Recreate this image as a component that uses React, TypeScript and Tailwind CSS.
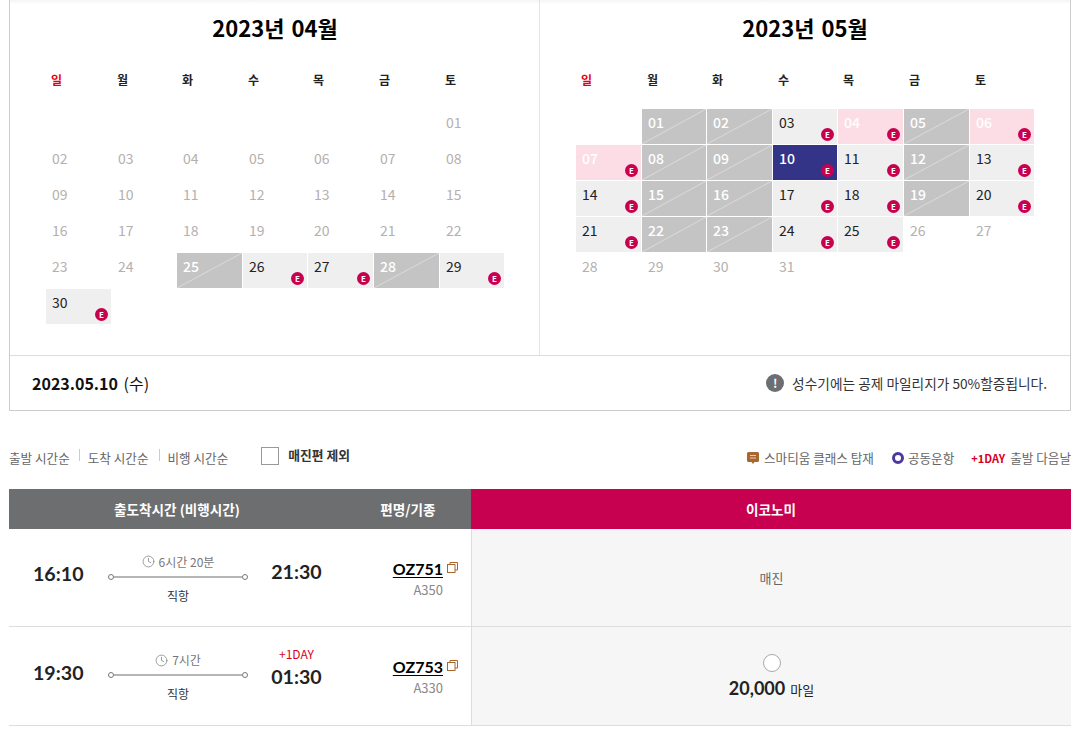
import type { ReactNode } from 'react'
import { Clock } from 'lucide-react'

type Kind = 'blank' | 'plain' | 'sold' | 'open' | 'peak' | 'selected'
type Day = { label: string; kind: Kind }

const WEEK = ['일', '월', '화', '수', '목', '금', '토']

const fmt = (n: number) => String(n).padStart(2, '0')

function buildMonth(offset: number, last: number, kinds: Record<number, Kind>): Day[] {
  const days: Day[] = []
  for (let i = 0; i < offset; i++) days.push({ label: '', kind: 'blank' })
  for (let d = 1; d <= last; d++) days.push({ label: fmt(d), kind: kinds[d] ?? 'plain' })
  return days
}

const APRIL = buildMonth(6, 30, { 25: 'sold', 26: 'open', 27: 'open', 28: 'sold', 29: 'open', 30: 'open' })
const MAY = buildMonth(1, 31, {
  1: 'sold', 2: 'sold', 3: 'open', 4: 'peak', 5: 'sold', 6: 'peak', 7: 'peak',
  8: 'sold', 9: 'sold', 10: 'selected', 11: 'open', 12: 'sold', 13: 'open',
  14: 'open', 15: 'sold', 16: 'sold', 17: 'open', 18: 'open', 19: 'sold', 20: 'open',
  21: 'open', 22: 'sold', 23: 'sold', 24: 'open', 25: 'open',
})

function DayCell({ day }: { day: Day }) {
  if (day.kind === 'blank') return <div />
  const styles: Record<Kind, string> = {
    blank: '',
    plain: 'text-[#b5b0ad]',
    sold: 'font-medium text-white bg-[#c4c4c4] bg-[linear-gradient(to_bottom_right,#c4c4c4_calc(50%-1px),#d8d8d8_50%,#c4c4c4_calc(50%+1px))]',
    open: 'text-[#222] bg-[#efefef]',
    peak: 'font-medium text-white bg-[#fcdde6]',
    selected: 'font-medium text-white bg-[#333388]',
  }
  const hasBadge = day.kind === 'open' || day.kind === 'peak' || day.kind === 'selected'
  return (
    <div className={`relative pl-[6px] pt-[3px] text-[14px] leading-[20px] ${styles[day.kind]}`}>
      {day.label}
      {hasBadge && (
        <span className="absolute right-[3px] bottom-[3px] flex h-[13px] w-[13px] items-center justify-center rounded-full bg-[#c8004f] text-[8px] font-bold leading-none text-white">
          E
        </span>
      )}
    </div>
  )
}

function Month({ title, days, divided }: { title: string; days: Day[]; divided?: boolean }) {
  return (
    <div className={`pl-[36px] ${divided ? 'border-r border-[#e4e4e4]' : ''}`}>
      <h2 className="mb-[4px] flex h-[54px] w-[458px] items-center justify-center text-[22px] font-bold text-black [word-spacing:2px]">{title}</h2>
      <div className="mb-[7px] grid h-[44px] grid-cols-[65px_64px_65px_64px_65px_65px_64px] items-center gap-x-px">
        {WEEK.map((w, i) => (
          <div key={w} className={`pl-[5px] text-[12px] font-bold ${i === 0 ? 'text-[#e60012]' : 'text-[#222]'}`}>
            {w}
          </div>
        ))}
      </div>
      <div className="grid grid-cols-[65px_64px_65px_64px_65px_65px_64px] auto-rows-[35px] gap-px">
        {days.map((d, i) => (
          <DayCell key={i} day={d} />
        ))}
      </div>
    </div>
  )
}

function CopyIcon() {
  return (
    <svg width="11" height="11" viewBox="0 0 11 11" fill="none" stroke="#a8672f" strokeWidth="1">
      <rect x="0.5" y="2.5" width="7.5" height="8" fill="#fff" />
      <path d="M3 2.5V0.5H10.5V8H8" />
    </svg>
  )
}

function Route({ duration }: { duration: string }) {
  return (
    <div className="flex w-[140px] flex-col items-center pt-[2px]">
      <div className="flex items-center gap-[4px] text-[12px] leading-[18px] text-[#777]">
        <Clock size={13} strokeWidth={1.5} color="#888" />
        {duration}
      </div>
      <div className="mt-[3px] flex w-full items-center">
        <span className="h-[6px] w-[6px] shrink-0 rounded-full border border-[#777] bg-white" />
        <span className="h-[2px] flex-1 bg-[#b5b5b5]" />
        <span className="h-[6px] w-[6px] shrink-0 rounded-full border border-[#777] bg-white" />
      </div>
      <div className="mt-[7px] text-[12px] leading-[18px] text-[#333]">직항</div>
    </div>
  )
}

const LATO = "font-['Lato','Noto_Sans_CJK_KR',sans-serif]"

function FlightRow({ dep, arr, duration, code, craft, nextDay, children }: {
  dep: string
  arr: string
  duration: string
  code: string
  craft: string
  nextDay?: boolean
  children: ReactNode
}) {
  return (
    <div className={`grid grid-cols-[336px_126px_600px] border-b border-[#ddd] ${nextDay ? 'h-[99px]' : 'h-[98px]'}`}>
      <div className="flex items-center">
        <div className={`ml-[24px] w-[51px] pb-[7px] text-[19.6px] font-bold leading-none text-[#222] ${LATO}`}>{dep}</div>
        <div className="ml-[24px]">
          <Route duration={duration} />
        </div>
        <div className={`ml-[23px] flex w-[51px] flex-col items-center ${nextDay ? 'pb-[20px]' : 'pb-[11px]'}`}>
          {nextDay && <div className="mb-[4px] whitespace-nowrap text-[12px] leading-[18px] text-[#d7001f]">+1DAY</div>}
          <div className={`text-[19.6px] font-bold leading-none text-[#222] ${LATO}`}>{arr}</div>
        </div>
      </div>
      <div className="flex flex-col items-end justify-center pr-[28px] pt-[2px]">
        <div className={`relative text-[16px] font-bold leading-[20px] text-black underline underline-offset-2 ${LATO}`}>
          {code}
          <span className="absolute left-[calc(100%+4px)] top-[3px]">
            <CopyIcon />
          </span>
        </div>
        <div className="mt-[2px] text-[13px] leading-[18px] text-[#888]">{craft}</div>
      </div>
      <div className="flex flex-col items-center justify-center border-l border-[#ddd] bg-[#f6f6f6]">{children}</div>
    </div>
  )
}

export default function App() {
  return (
    <div className="h-[734px] overflow-hidden bg-white pl-[9px] font-['Noto_Sans_CJK_KR','Noto_Sans',sans-serif]">
      <div className="w-[1062px]">
        <section className="border-x border-b border-[#ccc] bg-[linear-gradient(to_bottom,#f4f4f4,#fff_4px)]">
          <div className="grid h-[355px] grid-cols-2">
            <Month title="2023년 04월" days={APRIL} divided />
            <Month title="2023년 05월" days={MAY} />
          </div>
          <div className="flex h-[55px] items-center justify-between border-t border-[#ddd] pl-[22px] pr-[23px]">
            <div className="text-[16px] text-[#111]">
              <span className="font-bold">2023.05.10</span> <span className="ml-[2px]">(수)</span>
            </div>
            <div className="flex items-center gap-[8px] text-[13.7px] text-[#333]">
              <span className="flex h-[18px] w-[18px] items-center justify-center rounded-full bg-[#6d6e71] text-[12px] font-bold leading-none text-white">!</span>
              성수기에는 공제 마일리지가 50%할증됩니다.
            </div>
          </div>
        </section>

        <div className="flex h-[78px] items-center justify-between pt-[12px]">
          <div className="flex items-center">
            <div className="flex items-center pt-[4px] text-[12.6px] leading-[18px] text-[#666]">
              <span>출발 시간순</span>
              <span className="ml-[9px] mr-[8px] mb-[6px] h-[12px] w-px bg-[#ccc]" />
              <span>도착 시간순</span>
              <span className="ml-[10px] mr-[8px] mb-[6px] h-[12px] w-px bg-[#ccc]" />
              <span>비행 시간순</span>
            </div>
            <span className="ml-[33px] h-[18px] w-[18px] border border-[#999] bg-white" />
            <span className="mb-[3px] ml-[9px] text-[12.8px] font-bold leading-[18px] text-[#333]">매진편 제외</span>
          </div>
          <div className="flex items-center pt-[4px] text-[12.6px] leading-[18px] text-[#666]">
            <svg width="12" height="13" viewBox="0 0 12 13" className="mr-[5px]">
              <path d="M1.5 0h9A1.5 1.5 0 0 1 12 1.5v7A1.5 1.5 0 0 1 10.500 10H7.500L6 12 4.500 10h-3A1.500 1.500 0 0 1 0 8.500v-7A1.500 1.500 0 0 1 1.500 0z" fill="#a8672f" />
              <path d="M3 3.500h6M3 6h6" stroke="#e8cdb0" strokeWidth="1" />
            </svg>
            <span>스마티움 클래스 탑재</span>
            <span className="ml-[18px] mr-[4px] h-[12px] w-[12px] rounded-full border-[3px] border-[#4b3a9b]" />
            <span>공동운항</span>
            <span className="ml-[17px] mr-[5px] text-[11px] font-bold text-[#d7001f]">+1DAY</span>
            <span>출발 다음날</span>
          </div>
        </div>

        <div className="grid h-[40px] grid-cols-[336px_126px_600px] items-center bg-[#6d6e70] text-center text-[13.6px] font-bold text-white">
          <div>출도착시간 (비행시간)</div>
          <div>편명/기종</div>
          <div className="flex h-full items-center justify-center bg-[#c70050]">이코노미</div>
        </div>

        <FlightRow dep="16:10" arr="21:30" duration="6시간 20분" code="OZ751" craft="A350">
          <span className="text-[13px] text-[#666]">매진</span>
        </FlightRow>
        <FlightRow dep="19:30" arr="01:30" duration="7시간" code="OZ753" craft="A330" nextDay>
          <span className="mb-[5px] mt-[1px] h-[18px] w-[18px] rounded-full border border-[#aaa] bg-white" />
          <div className="flex items-baseline gap-[5px] text-[#222]">
            <span className={`text-[18px] font-bold leading-[22px] ${LATO}`}>20,000</span>
            <span className="text-[13px]">마일</span>
          </div>
        </FlightRow>
      </div>
    </div>
  )
}
